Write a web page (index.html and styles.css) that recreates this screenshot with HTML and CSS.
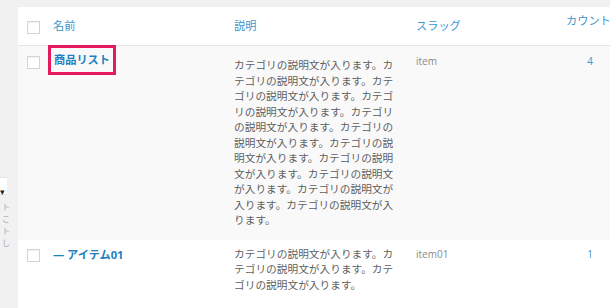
FILE: index.html
```html
<!DOCTYPE html>
<html lang="ja">
<head>
<meta charset="UTF-8">
<meta name="viewport" content="width=device-width, initial-scale=1.0">
<title>カテゴリー</title>
<link rel="stylesheet" href="styles.css">
</head>
<body>
    <div class="page">
        <div class="side">
            <div class="side-inner">
                <div class="select"><span class="caret">▾</span></div>
                <p class="side-text">ト<br>こ<br>ト<br>し</p>
            </div>
        </div>
        <div class="list">
            <div class="row head">
                <div class="cell check"><span class="cb"></span></div>
                <div class="cell name"><a href="#">名前</a></div>
                <div class="cell desc"><a href="#">説明</a></div>
                <div class="cell slug"><a href="#">スラッグ</a></div>
                <div class="cell count count-head"><a href="#">カウント</a></div>
            </div>

            <div class="row alt">
                <div class="cell check"><span class="cb"></span></div>
                <div class="cell name first"><a class="term boxed" href="#">商品リスト</a></div>
                <div class="cell desc first">カテゴリの説明文が入ります。カテゴリの説明文が入ります。カテゴリの説明文が入ります。カテゴリの説明文が入ります。カテゴリの説明文が入ります。カテゴリの説明文が入ります。カテゴリの説明文が入ります。カテゴリの説明文が入ります。カテゴリの説明文が入ります。カテゴリの説明文が入ります。カテゴリの説明文が入ります。</div>
                <div class="cell slug">item</div>
                <div class="cell count"><a href="#">4</a></div>
            </div>

            <div class="row">
                <div class="cell check"><span class="cb"></span></div>
                <div class="cell name"><a class="term" href="#">— アイテム01</a></div>
                <div class="cell desc">カテゴリの説明文が入ります。カテゴリの説明文が入ります。カテゴリの説明文が入ります。</div>
                <div class="cell slug">item01</div>
                <div class="cell count"><a href="#">1</a></div>
            </div>
        </div>
    </div>
</body>
</html>
```

FILE: styles.css
```css
body{
  margin: 0;
  background-color: #f1f1f1;
  font-family: "Open Sans", "Noto Sans CJK JP", sans-serif;
  overflow: hidden;
}

a{
  text-decoration: none;
}

.page{
  display: flex;
  flex-direction: row;
  height: 308px;
}

.side{
  width: 18px;
  flex-shrink: 0;
  overflow: hidden;
}

.side-inner{
  margin-left: -24px;
  padding-top: 177px;
  width: 31px;
}

.select{
  height: 16px;
  background-color: white;
  border: 1px solid #e4e4e4;
  border-right: none;
  text-align: right;
}

.caret{
  font-size: 9px;
  line-height: 16px;
  color: #222;
  margin-right: 2px;
}

.side-text{
  margin: 6px 0 0;
  text-align: right;
  font-size: 8px;
  line-height: 12px;
  color: #aaa;
  margin-right: -3px;
}

.list{
  margin-top: 7px;
  background-color: white;
  flex-shrink: 0;
}

.row{
  display: grid;
  grid-template-columns: 26px 182px 182px 132px 100px;
  align-items: start;
}

.alt{
  background-color: #f9f9f9;
}

.head{
  height: 38px;
  border-bottom: 1px solid #e4e4e4;
}

.cell{
  padding: 7px 8px 0;
  font-size: 10.7px;
  line-height: 15.5px;
  color: #5f5f5f;
}

.check{
  padding: 9px 0 0 9px;
}

.cb{
  display: block;
  width: 11px;
  height: 11px;
  border: 1px solid #d4d4d4;
  background-color: white;
  box-shadow: inset 0 1px 1px rgba(0,0,0,0.06);
}

.head .cell{
  padding-top: 11px;
  font-size: 11.2px;
  line-height: 16px;
}

.head .check{
  padding-top: 14px;
}

.head a{
  color: #3b97cf;
}

.head .count-head{
  padding-top: 6px;
  text-align: left;
  padding-left: 26px;
}

.name{
  padding-left: 9px;
}

.term{
  font-size: 11.2px;
  line-height: 16px;
  font-weight: bold;
  color: #1d7fbe;
}

.alt .check{
  padding-top: 10px;
}

.name.first{
  padding-top: 0;
}

.boxed{
  display: block;
  width: fit-content;
  margin: -1px 0 0 -5px;
  padding: 0 3px;
  line-height: 24px;
  border: 3px solid #e5195e;
}

.desc.first{
  padding-top: 12px;
  padding-bottom: 11px;
}

.slug{
  font-size: 10px;
  color: #8a8a8a;
}

.alt .slug, .alt .count{
  padding-top: 8px;
}

.count{
  text-align: center;
  font-size: 10px;
}

.count a{
  color: #3b97cf;
}
```
